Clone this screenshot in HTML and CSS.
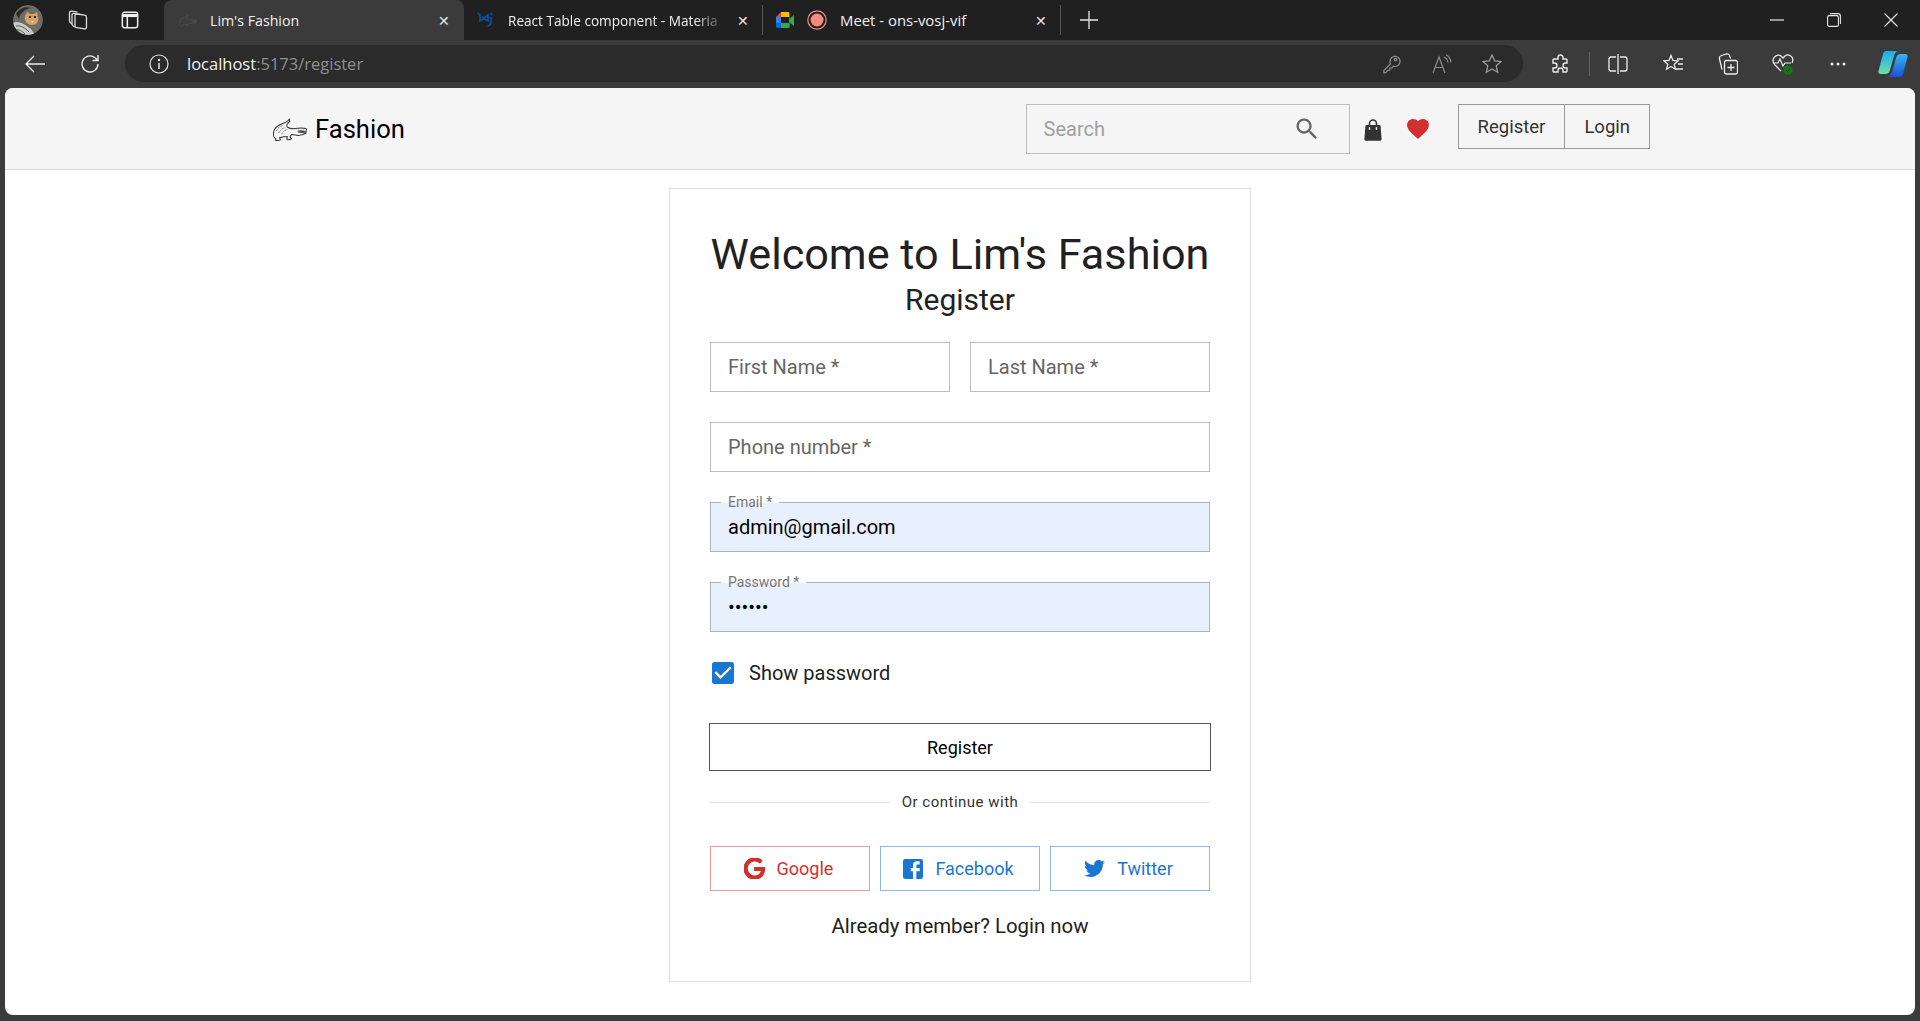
FILE: index.html
```html
<!DOCTYPE html>
<html lang="en">
<head>
    <meta charset="UTF-8">
    <meta name="viewport" content="width=device-width, initial-scale=1.0">
    <title>Lim's Fashion</title>
    <link rel="stylesheet" href="styles.css">
</head>
<body>
    <svg class="defs" width="0" height="0">
        <symbol id="croc" viewBox="0 0 100 67">
            <path d="M48 2C46 8 38 12 30 15 14 21 1 32 1 46c0 8 3 14 8 15l-2 4c5 1 11 1 15-1l-3-6c4-1 8-2 12-3 4 0 8 0 11-1l-1 9c4 1 9 0 14-2l-5-6 5-7 11 2c10 2 21 1 32-7-6 0-16 0-24-2 8-1 18-2 26-3l-2-7c-9-2-18-2-25-1-12 2-24 1-30-3-5-4-2-11 6-17z" fill="none" stroke="currentColor" stroke-width="3" stroke-linejoin="round"/>
            <path d="M10 38C13 30 21 24 30 21M17 44C20 36 27 30 36 28M26 47C28 40 34 36 42 33" fill="none" stroke="currentColor" stroke-width="2" stroke-dasharray="3 2"/>
            <path d="M72 38l4-3 3 3 4-3 3 3 4-3" fill="none" stroke="currentColor" stroke-width="2"/>
        </symbol>
    </svg>

    <div class="tabstrip">
        <div class="avatar">
            <svg viewBox="0 0 30 30" width="30" height="30">
                <circle cx="15" cy="15" r="15" fill="#6d6d68"/>
                <path d="M0 18c6-3 12 2 18 6l4 6H5c-4-3-5-8-5-12z" fill="#c9cbc6"/>
                <path d="M3 21c5-1 9 2 13 6M2 25c4-1 7 1 10 4" stroke="#5b5d5a" fill="none"/>
                <path d="M3 9c3-5 9-8 15-6-6 1-11 5-12 11z" fill="#2e2f2c"/>
                <path d="M12 11l2-4 3 2h4l3-2 1 5c1 4-1 8-6 8s-8-4-7-9z" fill="#d9a066"/>
                <path d="M16 12h2M21 12h2" stroke="#33261a" stroke-width="2"/>
                <path d="M18 16h3l-1.500 2z" fill="#f4e3d0"/>
            </svg>
        </div>
        <div class="strip-icon strip-icon-first">
            <svg viewBox="0 0 22 22" width="22" height="22" fill="none" stroke="#dcdcdc" stroke-width="1.300">
                <path d="M8 6.500c0-1 .8-1.700 1.800-1.500l8 1.200c1 .1 1.700 1 1.700 2v10c0 1-.9 1.800-1.900 1.600l-8-1.200c-1-.1-1.600-1-1.600-1.900z"/>
                <path d="M8 18l-1.700-1c-.8-.5-1.300-1.300-1.300-2.200V6c0-1 .8-1.800 1.900-1.600l6.600 1"/>
                <path d="M5 15l-1.500-1.200C2.800 13.200 2.500 12.400 2.500 11.500V4c0-1.200 1-2 2.100-1.800l5.900 1"/>
            </svg>
        </div>
        <div class="strip-icon">
            <svg viewBox="0 0 20 20" width="18" height="18" fill="none" stroke="#f0f0f0" stroke-width="1.700">
                <rect x="1.500" y="1.500" width="17" height="17" rx="2.500"/>
                <path d="M1.500 5h17" stroke-width="3.500"/>
                <path d="M7 6v12"/>
            </svg>
        </div>

        <div class="tab tab-active">
            <svg class="tab-favicon tab-favicon-dim" width="18" height="13"><use href="#croc"/></svg>
            <span class="tab-title">Lim's Fashion</span>
            <span class="tab-close">&#10005;</span>
        </div>
        <div class="tab tab-react">
            <svg class="tab-favicon" viewBox="0 0 36 32" width="18" height="16">
                <path d="M1 2l5 4v12l8-5 8 5V6l-8 6-4-3" fill="none" stroke="#0b4f9e" stroke-width="3.500"/>
                <path d="M28 10v10c0 4-3 7-7 8" fill="none" stroke="#0b4f9e" stroke-width="3.500"/>
                <circle cx="29" cy="4" r="2.500" fill="#0b4f9e"/>
            </svg>
            <span class="tab-title tab-title-fade">React Table component - Materia</span>
            <span class="tab-close">&#10005;</span>
        </div>
        <div class="tab-sep"></div>
        <div class="tab tab-meet">
            <svg class="tab-favicon" viewBox="0 0 18 18" width="18" height="18">
                <path d="M0 6l5-5v5z" fill="#ea4335"/>
                <path d="M5 1h8v5H5z" fill="#fbbc04"/>
                <path d="M0 6h5v6H0z" fill="#2684fc"/>
                <path d="M0 12h5v5H1.500A1.500 1.500 0 0 1 0 15.500z" fill="#0066da"/>
                <path d="M5 12h8v5H5z" fill="#34a853"/>
                <path d="M13 1v16l1-1V2z" fill="#188038"/>
                <path d="M13 8l5-4v11l-5-4z" fill="#34a853"/>
                <rect x="5" y="6" width="8" height="6" fill="#202020"/>
            </svg>
            <svg class="tab-record" viewBox="0 0 20 20" width="20" height="20">
                <circle cx="10" cy="10" r="9.200" fill="none" stroke="#f28b82" stroke-width="1.200"/>
                <circle cx="10" cy="10" r="6.500" fill="#f28b82"/>
            </svg>
            <span class="tab-title">Meet - ons-vosj-vif</span>
            <span class="tab-close">&#10005;</span>
        </div>
        <div class="tab-sep"></div>
        <div class="tab-new">
            <svg viewBox="0 0 18 18" width="18" height="18" stroke="#e6e6e6" stroke-width="1.300"><path d="M9 0v18M0 9h18"/></svg>
        </div>

        <div class="win-controls">
            <svg viewBox="0 0 14 14" width="14" height="14" stroke="#e6e6e6" stroke-width="1.200"><path d="M0 7h14"/></svg>
            <svg viewBox="0 0 14 14" width="14" height="14" fill="none" stroke="#e6e6e6" stroke-width="1.100"><rect x=".6" y="2.600" width="10.800" height="10.800" rx="1.500"/><path d="M3 .6h8c1.300 0 2.400 1 2.400 2.400v8"/></svg>
            <svg viewBox="0 0 14 14" width="14" height="14" stroke="#e6e6e6" stroke-width="1.100"><path d="M.5.500l13 13M13.500.5l-13 13"/></svg>
        </div>
    </div>

    <div class="toolbar">
        <div class="tool">
            <svg viewBox="0 0 20 18" width="20" height="18" fill="none" stroke="#ececec" stroke-width="1.400"><path d="M20 9H1M9 1L1 9l8 8"/></svg>
        </div>
        <div class="tool">
            <svg viewBox="0 0 20 20" width="20" height="20" fill="none" stroke="#ececec" stroke-width="1.400"><path d="M18 10a8 8 0 1 1-3-6.300L18 6.500M18 1v5.500h-5.500"/></svg>
        </div>
        <div class="addressbar">
            <svg class="info-icon" viewBox="0 0 20 20" width="20" height="20" fill="none" stroke="#e6e6e6" stroke-width="1.200">
                <circle cx="10" cy="10" r="9"/><path d="M10 9v6" stroke-width="1.500"/><circle cx="10" cy="6" r=".6" fill="#e6e6e6"/>
            </svg>
            <span class="url"><span class="url-host">localhost</span>:5173/register</span>
            <div class="address-tools">
                <div class="address-tool">
                    <svg viewBox="0 0 18 20" width="18" height="20" fill="none" stroke="#8b8b8b" stroke-width="1.300"><path d="M7 7.500a5 5 0 1 1 3.500 4.700L9 14l-2 .2-.3 2-2 .2L3 18.500 1 19l-.2-2.500 6.600-6.500C7 9.300 7 8.400 7 7.500z"/><circle cx="12.500" cy="5.500" r="1.200"/></svg>
                </div>
                <div class="address-tool">
                    <svg viewBox="0 0 20 20" width="20" height="20" fill="none" stroke="#8b8b8b" stroke-width="1.200"><path d="M1 19L7 3l6 16M3.200 13.500h7.600"/><path d="M12 3c2 1 3.500 3 4 5.500M14 .8c2.800 1.500 4.600 4.200 5 7.700"/></svg>
                </div>
                <div class="address-tool">
                    <svg viewBox="0 0 20 20" width="20" height="20" fill="none" stroke="#9a9a9a" stroke-width="1.300"><path d="M10 1l2.700 6 6.300.6-4.800 4.200 1.500 6.500L10 15l-5.700 3.300 1.500-6.500L1 7.600 7.300 7z"/></svg>
                </div>
            </div>
        </div>
        <div class="tools-right">
            <div class="tool">
                <svg viewBox="0 0 20 20" width="20" height="20" fill="none" stroke="#ececec" stroke-width="1.400"><path d="M8 3.500a2.500 2.500 0 0 1 5 0V5h3a1 1 0 0 1 1 1v3h-1.500a2.500 2.500 0 0 0 0 5H17v3a1 1 0 0 1-1 1h-3v-1.500a2.500 2.500 0 0 0-5 0V18H4a1 1 0 0 1-1-1v-3h1.500a2.500 2.500 0 0 0 0-5H3V6a1 1 0 0 1 1-1h4z"/></svg>
            </div>
            <div class="tool-sep"></div>
            <div class="tool">
                <svg viewBox="0 0 20 22" width="20" height="22" fill="none" stroke="#ececec" stroke-width="1.300"><path d="M8 4H3c-1.200 0-2 .8-2 2v10c0 1.200.8 2 2 2h5M12 4h5c1.200 0 2 .8 2 2v10c0 1.200-.8 2-2 2h-5M10 1v20"/></svg>
            </div>
            <div class="tool">
                <svg viewBox="0 0 20 20" width="20" height="20" fill="none" stroke="#ececec" stroke-width="1.300"><path d="M8 1.500l2 5 5 .4-3.800 3.300 1.200 5L8 12.500 3.600 15.200l1.200-5L1 6.900l5-.4z"/><path d="M14 5h6M15 10h5M13 15h7"/></svg>
            </div>
            <div class="tool">
                <svg viewBox="0 0 20 22" width="20" height="22" fill="none" stroke="#ececec" stroke-width="1.300"><rect x="6.500" y="7.500" width="13" height="13.500" rx="2"/><path d="M13 11v7M9.500 14.500h7"/><path d="M4 16.500L1.500 6C1 4 2 3 3.500 2.500l5-1.500c1.500-.4 2.500.3 3 1.500l1 3"/></svg>
            </div>
            <div class="tool tool-health">
                <svg viewBox="0 0 22 22" width="22" height="22" fill="none">
                    <path d="M9 18L3 12C1 10 .5 8 1.500 5.500 3 2 7 1.500 9 3l2 2 2-2c2.500-2 6-1 7.500 2 .5 1.500.5 3-.5 5" stroke="#ececec" stroke-width="1.300"/>
                    <path d="M1 10h5l2-4 3 7 2-3h6" stroke="#ececec" stroke-width="1.200"/>
                    <circle cx="16" cy="17" r="4.500" fill="#107c10"/>
                    <path d="M14 17l1.500 1.500 2.500-3" stroke="#0d3b0d" stroke-width="1"/>
                </svg>
            </div>
            <div class="tool">
                <svg viewBox="0 0 16 4" width="16" height="4" fill="#ececec"><circle cx="2" cy="2" r="1.500"/><circle cx="8" cy="2" r="1.500"/><circle cx="14" cy="2" r="1.500"/></svg>
            </div>
            <div class="tool">
                <svg viewBox="0 0 30 30" width="30" height="30">
                    <defs>
                        <linearGradient id="copilotA" x1="0" y1="0" x2="0" y2="1"><stop offset="0" stop-color="#1aa9f0"/><stop offset="1" stop-color="#6fe0a8"/></linearGradient>
                        <linearGradient id="copilotB" x1="0" y1="0" x2="0" y2="1"><stop offset="0" stop-color="#35b6f5"/><stop offset="1" stop-color="#1b4fd8"/></linearGradient>
                    </defs>
                    <path d="M8 2h13c-3 0-4 2-5 5l-4 14c-1 3-2 4-5 4H3C1 25 0 24 .5 22L5 5c.5-2 1.500-3 3-3z" fill="url(#copilotA)"/>
                    <path d="M22 28H9c3 0 4-2 5-5l4-14c1-3 2-4 5-4h4c2 0 3 1 2.500 3L25 25c-.5 2-1.500 3-3 3z" fill="url(#copilotB)"/>
                </svg>
            </div>
        </div>
    </div>

    <div class="viewport">
        <div class="page">
            <header class="site-header">
                <div class="header-inner">
                    <a class="logo">
                        <svg class="logo-mark" width="34" height="23"><use href="#croc"/></svg>
                        <span>Fashion</span>
                    </a>
                    <div class="header-actions">
                        <div class="search">
                            <input class="search-input" type="text" placeholder="Search">
                            <svg viewBox="0 0 24 24" width="28" height="28" fill="#666"><path d="M15.500 14h-.79l-.28-.27C15.410 12.590 16 11.110 16 9.500 16 5.910 13.090 3 9.500 3S3 5.910 3 9.500 5.910 16 9.500 16c1.610 0 3.090-.59 4.230-1.570l.27.28v.79l5 4.990L20.490 19l-4.990-5zm-6 0C7.010 14 5 11.990 5 9.500S7.010 5 9.500 5 14 7.010 14 9.500 11.990 14 9.500 14z"/></svg>
                        </div>
                        <svg class="bag-icon" viewBox="0 0 18 22" width="18" height="22">
                            <path d="M5.500 6V4.500a3.500 3.500 0 0 1 7 0V6M5 6v0" fill="none" stroke="#333" stroke-width="1.600"/>
                            <path d="M2.500 6h13c.6 0 1 .4 1.100 1l1 13c0 1-.6 1.800-1.600 1.800H2C1 21.800.4 21 .4 20l1-13c.1-.6.5-1 1.100-1z" fill="#333"/>
                            <rect x="4.800" y="8" width="1.500" height="3" rx=".7" fill="#f5f5f5"/>
                            <rect x="11.700" y="8" width="1.500" height="3" rx=".7" fill="#f5f5f5"/>
                        </svg>
                        <svg class="heart-icon" viewBox="2 3 20 18.350" width="22" height="20" fill="#d32f2f"><path d="M12 21.350l-1.450-1.320C5.400 15.360 2 12.280 2 8.500 2 5.420 4.420 3 7.500 3c1.740 0 3.410.81 4.500 2.090C13.090 3.810 14.760 3 16.500 3 19.580 3 22 5.420 22 8.500c0 3.780-3.400 6.860-8.550 11.540L12 21.350z"/></svg>
                        <div class="auth-group">
                            <button class="auth-btn auth-btn-register">Register</button>
                            <button class="auth-btn">Login</button>
                        </div>
                    </div>
                </div>
            </header>

            <main class="card">
                <h1 class="card-title">Welcome to Lim's Fashion</h1>
                <h2 class="card-subtitle">Register</h2>

                <form class="form">
                    <div class="field-row">
                        <input class="field" type="text" placeholder="First Name *">
                        <input class="field" type="text" placeholder="Last Name *">
                    </div>
                    <input class="field" type="text" placeholder="Phone number *">
                    <div class="field-wrap">
                        <label class="field-label">Email *</label>
                        <input class="field field-filled" type="text" value="admin@gmail.com">
                    </div>
                    <div class="field-wrap">
                        <label class="field-label">Password *</label>
                        <input class="field field-filled" type="password" value="secret">
                    </div>
                </form>

                <label class="show-password">
                    <svg viewBox="3 3 18 18" width="22" height="22" fill="#1976d2"><path d="M19 3H5c-1.110 0-2 .9-2 2v14c0 1.100.89 2 2 2h14c1.110 0 2-.9 2-2V5c0-1.100-.89-2-2-2zm-9 14l-5-5 1.410-1.410L10 14.170l7.590-7.590L19 8l-9 9z"/></svg>
                    <span>Show password</span>
                </label>

                <button class="submit-btn" type="button">Register</button>

                <div class="divider"><span>Or continue with</span></div>

                <div class="socials">
                    <button class="social-btn social-google" type="button">
                        <svg viewBox="2 2 20 20" width="21" height="21" fill="currentColor"><path d="M21.350 11.100h-9.170v2.730h6.510c-.33 3.810-3.500 5.440-6.500 5.440C8.360 19.270 5 16.250 5 12c0-4.100 3.200-7.270 7.200-7.270 3.090 0 4.900 1.970 4.900 1.970L19 4.720S16.560 2 12.100 2C6.420 2 2.030 6.800 2.030 12c0 5.050 4.130 10 10.220 10 5.350 0 9.250-3.670 9.250-9.090 0-1.150-.15-1.810-.15-1.810z" stroke="currentColor" stroke-width="1.200"/></svg>
                        Google
                    </button>
                    <button class="social-btn social-blue" type="button">
                        <svg viewBox="3 3 18 18" width="20" height="20" fill="currentColor"><path d="M5 3h14a2 2 0 0 1 2 2v14a2 2 0 0 1-2 2H5a2 2 0 0 1-2-2V5a2 2 0 0 1 2-2m13 2h-2.500A3.500 3.500 0 0 0 12 8.500V11h-2v3h2v7h3v-7h3v-3h-3V9a1 1 0 0 1 1-1h2V5z"/></svg>
                        Facebook
                    </button>
                    <button class="social-btn social-blue" type="button">
                        <svg viewBox="1.500 4 21 17" width="21" height="17" fill="currentColor"><path d="M22.460 6c-.77.35-1.600.58-2.460.69.88-.53 1.560-1.370 1.880-2.380-.83.5-1.750.85-2.720 1.050C18.370 4.500 17.260 4 16 4c-2.350 0-4.270 1.920-4.270 4.290 0 .34.04.67.11.98C8.280 9.090 5.110 7.380 3 4.790c-.37.63-.58 1.370-.58 2.150 0 1.490.75 2.810 1.910 3.560-.71 0-1.370-.2-1.950-.5v.03c0 2.080 1.480 3.820 3.440 4.210a4.220 4.220 0 0 1-1.930.07 4.280 4.280 0 0 0 4 2.980 8.521 8.521 0 0 1-5.330 1.840c-.34 0-.68-.02-1.020-.06C3.440 20.290 5.700 21 8.120 21 16 21 20.330 14.460 20.330 8.790c0-.19 0-.37-.01-.56.84-.6 1.560-1.360 2.140-2.230z"/></svg>
                        Twitter
                    </button>
                </div>

                <p class="card-foot">Already member? Login now</p>
            </main>
        </div>
    </div>
</body>
</html>
```

FILE: styles.css
```css
* {
    box-sizing: border-box;
}

html,
body {
    height: 100%;
}

body {
    margin: 0;
    display: flex;
    flex-direction: column;
    overflow: hidden;
    background-color: #3b3b3b;
    font-family: Roboto, "Liberation Sans", sans-serif;
}

.defs {
    display: none;
}

/* browser chrome */
.tabstrip {
    display: flex;
    align-items: center;
    height: 40px;
    flex-shrink: 0;
    background-color: #202020;
    font-family: "Open Sans", "Liberation Sans", sans-serif;
    color: #f0f0f0;
}

.avatar {
    width: 30px;
    height: 30px;
    margin-left: 13px;
    border-radius: 50%;
    overflow: hidden;
}

.avatar svg {
    display: block;
}

.strip-icon {
    display: flex;
    margin-left: 32px;
}

.strip-icon-first {
    margin-left: 24px;
}

.tab {
    display: flex;
    align-items: center;
    height: 40px;
    font-size: 14.900px;
}

.tab-active {
    width: 300px;
    margin-left: 25px;
    padding: 0 13px 0 15px;
    background-color: #3b3b3b;
    border-radius: 8px 8px 0 0;
    font-size: 14.200px;
}

.tab-react {
    width: 298px;
    padding: 0 12px 0 13px;
}

.tab-meet {
    width: 297px;
    padding: 0 12px 0 13px;
}

.tab-favicon {
    flex-shrink: 0;
    margin-right: 13px;
}

.tab-favicon-dim {
    color: #5a5a5a;
}

.tab-record {
    flex-shrink: 0;
    margin-right: 13px;
}

.tab-title {
    flex: 1;
    white-space: nowrap;
}

.tab-title-fade {
    font-size: 13.600px;
    -webkit-mask-image: linear-gradient(to right, #000 85%, transparent);
    mask-image: linear-gradient(to right, #000 85%, transparent);
}

.tab-close {
    width: 14px;
    margin-left: 9px;
    font-size: 14px;
    text-align: center;
    color: #e6e6e6;
}

.tab-sep {
    width: 1px;
    height: 30px;
    background-color: #555;
}

.tab-new {
    display: flex;
    margin-left: 19px;
}

.win-controls {
    display: flex;
    gap: 43px;
    margin-left: auto;
    margin-right: 22px;
}

.toolbar {
    display: flex;
    align-items: center;
    height: 48px;
    flex-shrink: 0;
    padding-left: 7px;
    padding-bottom: 1px;
    background-color: #3b3b3b;
}

.tool {
    display: flex;
    align-items: center;
    justify-content: center;
    width: 55px;
    height: 37px;
}

.addressbar {
    display: flex;
    align-items: center;
    width: 1398px;
    height: 37px;
    margin-left: 8px;
    padding: 0 6px 0 24px;
    background-color: #2b2b2b;
    border-radius: 19px;
}

.info-icon {
    flex-shrink: 0;
}

.url {
    margin-left: 18px;
    font-family: "Open Sans", "Liberation Sans", sans-serif;
    font-size: 16.500px;
    color: #8f8f8f;
}

.url-host {
    color: #f2f2f2;
}

.address-tools {
    display: flex;
    margin-left: auto;
}

.address-tool {
    display: flex;
    align-items: center;
    justify-content: center;
    width: 50px;
}

.tools-right {
    display: flex;
    align-items: center;
    margin-left: 9px;
}

.tool-sep {
    width: 1px;
    height: 24px;
    margin-left: 2px;
    background-color: #666;
}

/* page */
.viewport {
    flex: 1;
    min-height: 0;
    padding: 0 5px 6px;
}

.page {
    height: 100%;
    overflow: hidden;
    background-color: #fff;
    border-radius: 8px;
}

.site-header {
    height: 82px;
    background-color: #f5f5f5;
    border-bottom: 1px solid #dcdcdc;
}

.header-inner {
    display: flex;
    justify-content: space-between;
    width: 1380px;
    margin: 0 auto;
    padding-top: 16px;
}

.logo {
    display: flex;
    align-items: center;
    gap: 8px;
    height: 50px;
    padding-left: 3px;
    font-size: 25.600px;
    color: #000;
}

.logo-mark {
    color: #333;
}

.header-actions {
    display: flex;
    align-items: flex-start;
}

.search {
    display: flex;
    align-items: center;
    width: 324px;
    height: 50px;
    padding: 0 28px 0 15px;
    border: 1px solid #bdbdbd;
}

.search-input {
    flex: 1;
    min-width: 0;
    border: 0;
    outline: 0;
    background: transparent;
    font-family: inherit;
    font-size: 20px;
    color: #333;
}

.search-input::placeholder {
    color: #a0a0a0;
}

.bag-icon {
    margin: 15px 0 0 14px;
}

.heart-icon {
    margin: 15px 0 0 25px;
}

.auth-group {
    display: flex;
    height: 45px;
    margin-left: 29px;
    border: 1px solid #999;
}

.auth-btn {
    height: 100%;
    padding: 0 19px;
    border: 0;
    background: transparent;
    font-family: inherit;
    font-size: 18.500px;
    color: #333;
}

.auth-btn-register {
    border-right: 1px solid #999;
}

.card {
    width: 582px;
    height: 794px;
    margin: 18px auto 0;
    padding: 38px 40px 0;
    background-color: #fff;
    border: 1px solid #e0e0e0;
}

.card-title {
    margin: 0;
    font-size: 43.200px;
    font-weight: 400;
    line-height: 55px;
    text-align: center;
    white-space: nowrap;
    color: #212121;
}

.card-subtitle {
    margin: 0 0 24px;
    font-size: 30px;
    font-weight: 400;
    line-height: 36px;
    text-align: center;
    color: #212121;
}

.form {
    display: flex;
    flex-direction: column;
    gap: 30px;
}

.field-row {
    display: flex;
    gap: 20px;
}

.field-wrap {
    position: relative;
}

.field {
    display: block;
    width: 100%;
    min-width: 0;
    height: 50px;
    padding: 0 17px;
    border: 1px solid #bdbdbd;
    border-radius: 0;
    outline: 0;
    background: #fff;
    font-family: inherit;
    font-size: 20px;
    color: #000;
}

.field::placeholder {
    color: #666;
    opacity: 1;
}

.field-filled {
    border-color: #a9b3c4;
    background-color: #e8f0fe;
}

/* only the part above the input's top edge is white, so the border looks notched */
.field-label {
    position: absolute;
    top: -8px;
    left: 11px;
    z-index: 1;
    padding: 0 7px;
    background: linear-gradient(#fff 9px, transparent 9px);
    font-size: 14px;
    line-height: 16px;
    color: #757575;
}

.show-password {
    display: flex;
    align-items: center;
    gap: 15px;
    height: 42px;
    margin: 20px 0 29px;
    padding-left: 2px;
    font-size: 20px;
    color: #212121;
}

.submit-btn {
    display: block;
    width: 502px;
    height: 48px;
    margin-left: -1px;
    border: 1px solid #555;
    background: #fff;
    font-family: inherit;
    font-size: 18px;
    color: #000;
}

.divider {
    display: flex;
    align-items: center;
    gap: 12px;
    height: 16px;
    margin: 23px 0 36px;
    font-size: 15px;
    letter-spacing: .5px;
    color: #333;
}

.divider::before,
.divider::after {
    content: "";
    flex: 1;
    height: 1px;
    background-color: #e0e0e0;
}

.socials {
    display: flex;
    gap: 10px;
}

.social-btn {
    display: flex;
    align-items: center;
    justify-content: center;
    gap: 12px;
    flex: 1;
    height: 45px;
    padding: 0 3px 0 0;
    background: #fff;
    font-family: inherit;
    font-size: 18px;
}

.social-google {
    border: 1px solid #ec9a9a;
    color: #d32f2f;
}

.social-blue {
    border: 1px solid #8bbbe9;
    color: #1976d2;
}

.card-foot {
    margin: 21px 0 0;
    font-size: 20.400px;
    line-height: 28px;
    text-align: center;
    color: #212121;
}
```
